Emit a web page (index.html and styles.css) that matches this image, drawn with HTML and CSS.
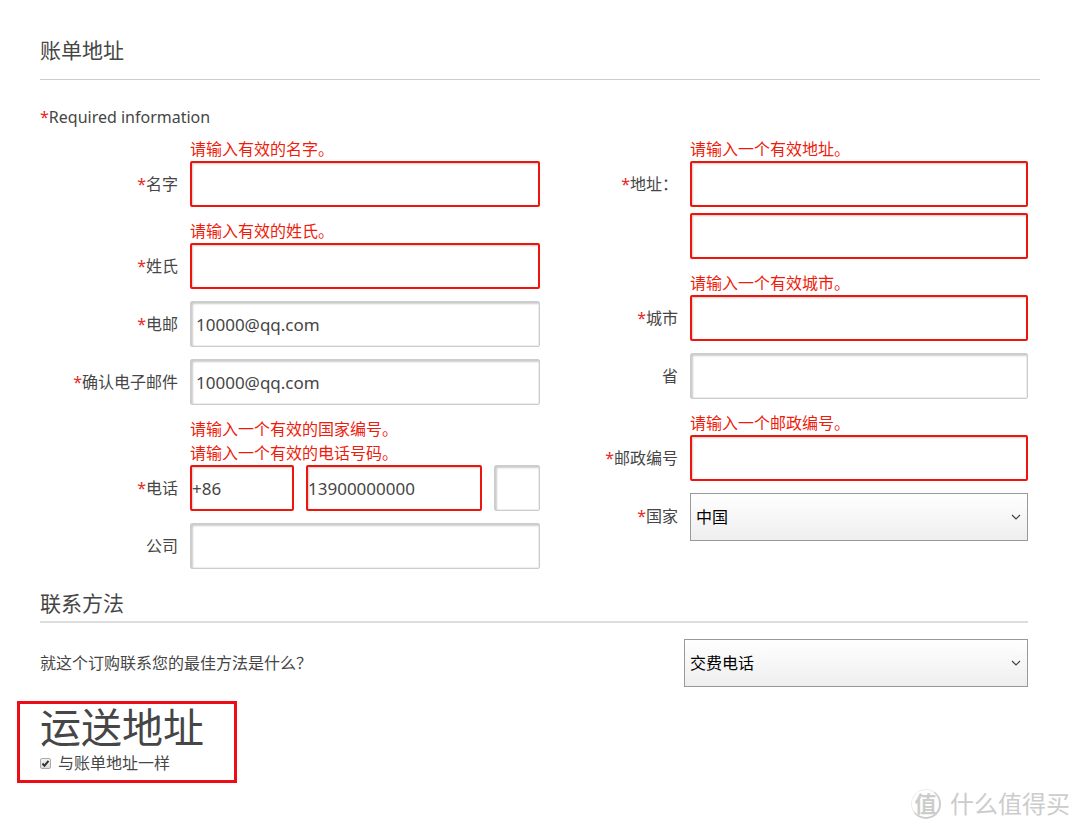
FILE: index.html
```html
<!DOCTYPE html>
<html lang="zh-CN">
<head>
<meta charset="utf-8">
<meta name="viewport" content="width=device-width, initial-scale=1">
<title>账单地址</title>
<link rel="stylesheet" href="styles.css">
</head>
<body>
<form class="page" novalidate>
  <h2 class="title title-main">账单地址</h2>
  <p class="required-note"><span class="star">*</span>Required information</p>

  <div class="columns">
    <div class="column">
      <div class="field">
        <div class="errors">请输入有效的名字。</div>
        <label class="label" for="first"><span class="star">*</span>名字</label>
        <div class="control"><input class="input invalid" id="first" type="text"></div>
      </div>
      <div class="field">
        <div class="errors">请输入有效的姓氏。</div>
        <label class="label" for="last"><span class="star">*</span>姓氏</label>
        <div class="control"><input class="input invalid" id="last" type="text"></div>
      </div>
      <div class="field">
        <label class="label" for="email"><span class="star">*</span>电邮</label>
        <div class="control"><input class="input" id="email" type="text" value="10000@qq.com"></div>
      </div>
      <div class="field">
        <label class="label" for="email2"><span class="star">*</span>确认电子邮件</label>
        <div class="control"><input class="input" id="email2" type="text" value="10000@qq.com"></div>
      </div>
      <div class="field">
        <div class="errors">请输入一个有效的国家编号。<br>请输入一个有效的电话号码。</div>
        <label class="label" for="phone"><span class="star">*</span>电话</label>
        <div class="control phone">
          <input class="input invalid tight" type="text" value="+86" aria-label="国家编号">
          <input class="input invalid tight" id="phone" type="text" value="13900000000">
          <input class="input" type="text" aria-label="分机">
        </div>
      </div>
      <div class="field">
        <label class="label" for="company">公司</label>
        <div class="control"><input class="input" id="company" type="text"></div>
      </div>
    </div>

    <div class="column">
      <div class="field">
        <div class="errors">请输入一个有效地址。</div>
        <label class="label" for="addr"><span class="star">*</span>地址：</label>
        <div class="control stack">
          <input class="input invalid" id="addr" type="text">
          <input class="input invalid" type="text" aria-label="地址第二行">
        </div>
      </div>
      <div class="field">
        <div class="errors">请输入一个有效城市。</div>
        <label class="label" for="city"><span class="star">*</span>城市</label>
        <div class="control"><input class="input invalid" id="city" type="text"></div>
      </div>
      <div class="field">
        <label class="label" for="province">省</label>
        <div class="control"><input class="input" id="province" type="text"></div>
      </div>
      <div class="field">
        <div class="errors">请输入一个邮政编号。</div>
        <label class="label" for="zip"><span class="star">*</span>邮政编号</label>
        <div class="control"><input class="input invalid" id="zip" type="text"></div>
      </div>
      <div class="field">
        <label class="label" for="country"><span class="star">*</span>国家</label>
        <div class="control"><select class="select" id="country"><option>中国</option></select></div>
      </div>
    </div>
  </div>

  <section class="contact">
    <h2 class="title title-contact">联系方法</h2>
    <div class="contact-row">
      <label for="method">就这个订购联系您的最佳方法是什么？</label>
      <select class="select method" id="method"><option>交费电话</option></select>
    </div>
  </section>

  <section class="shipping">
    <h1 class="shipping-title">运送地址</h1>
    <div class="same">
      <input class="check" id="same" type="checkbox" checked>
      <label for="same">与账单地址一样</label>
    </div>
  </section>

  <div class="watermark"><span class="badge">值</span><span>什么值得买</span></div>
</form>
</body>
</html>
```
FILE: styles.css
```css
* {
  box-sizing: border-box;
}

body {
  margin: 0;
  background: #fff;
  color: #464646;
  font: 16px/24px "Noto Sans", "Noto Sans CJK SC", sans-serif;
}

.page {
  position: relative;
  padding: 35px 40px 47px;
}

.title {
  margin: 0;
  font-size: 21px;
  font-weight: 400;
}

.title-main {
  padding-bottom: 14px;
  border-bottom: 1px solid #ccc;
  line-height: 30px;
}

.required-note {
  margin: 25px 0 8px;
}

.star {
  color: #e8281e;
}

.columns {
  display: grid;
  grid-template-columns: minmax(0, 500fr) minmax(0, 488fr);
  margin-right: 12px;
}

.column {
  display: flex;
  flex-direction: column;
  gap: 12px;
}

.field {
  display: grid;
  grid-template-columns: 138px minmax(0, 1fr);
  column-gap: 12px;
}

.errors {
  grid-column: 2;
  color: #ee1c0c;
}

.label {
  grid-column: 1;
  line-height: 46px;
  text-align: right;
}

.control {
  display: flex;
  grid-column: 2;
}

.stack {
  flex-direction: column;
  gap: 6px;
}

.phone {
  display: grid;
  grid-template-columns: 104fr 176fr 46fr;
  gap: 12px;
}

.input {
  width: 100%;
  min-width: 0;
  height: 46px;
  padding: 0 5px;
  border: 1px solid #ccc;
  border-radius: 2px;
  background: #fff;
  box-shadow: inset 2px 2px 2px #ccc, inset -1px -1px 0 #eee;
  color: #464646;
  font: inherit;
  font-size: 17px;
}

.invalid {
  border: 2px solid #ee160c;
  box-shadow: inset 1px 1px 2px #ccc;
}

.tight {
  padding: 0;
}

.select {
  width: 100%;
  height: 48px;
  padding: 0 5px;
  appearance: none;
  border: 1px solid #999;
  border-radius: 0;
  background:
    url("data:image/svg+xml,%3Csvg xmlns='http://www.w3.org/2000/svg' width='10' height='6'%3E%3Cpath d='M1 1l4 4 4-4' fill='none' stroke='%23444' stroke-width='1.2'/%3E%3C/svg%3E") no-repeat right 6px center,
    linear-gradient(#fff, #eee);
  color: #000;
  font: inherit;
}

.contact {
  margin: 19px 12px 0 0;
}

.title-contact {
  padding-bottom: 3px;
  border-bottom: 2px solid #ddd;
  line-height: 30px;
}

.contact-row {
  display: flex;
  align-items: center;
  justify-content: space-between;
  padding-top: 16px;
}

.method {
  width: 344px;
}

.shipping {
  width: 220px;
  margin: 14px 0 0 -23px;
  padding: 0 0 5px 20px;
  border: 3px solid #ee0c18;
}

.shipping-title {
  margin: 0;
  font-size: 41px;
  font-weight: 400;
  line-height: 47px;
}

.same {
  display: flex;
  align-items: center;
  gap: 7px;
}

.check {
  width: 11px;
  height: 11px;
  margin: 0;
  appearance: none;
  border: 1px solid #aaa;
  border-radius: 2px;
  background: linear-gradient(#f4f4f4, #ddd);
}

.check:checked {
  background:
    url("data:image/svg+xml,%3Csvg xmlns='http://www.w3.org/2000/svg' width='9' height='9'%3E%3Cpath d='M1.5 4.5l2 2.3 4-5' fill='none' stroke='%23333' stroke-width='2'/%3E%3C/svg%3E") no-repeat center,
    linear-gradient(#f4f4f4, #ddd);
}

.watermark {
  position: absolute;
  right: 10px;
  bottom: 10px;
  display: flex;
  align-items: center;
  gap: 9px;
  color: #ccc;
  font-size: 24px;
  line-height: 32px;
}

.badge {
  width: 30px;
  height: 30px;
  border: 1px solid #eee;
  border-radius: 50%;
  border-right: 2px solid #ccc;
  border-bottom: 2px solid #ccc;
  font-size: 22px;
  font-weight: 700;
  line-height: 26px;
  text-align: center;
}
```
